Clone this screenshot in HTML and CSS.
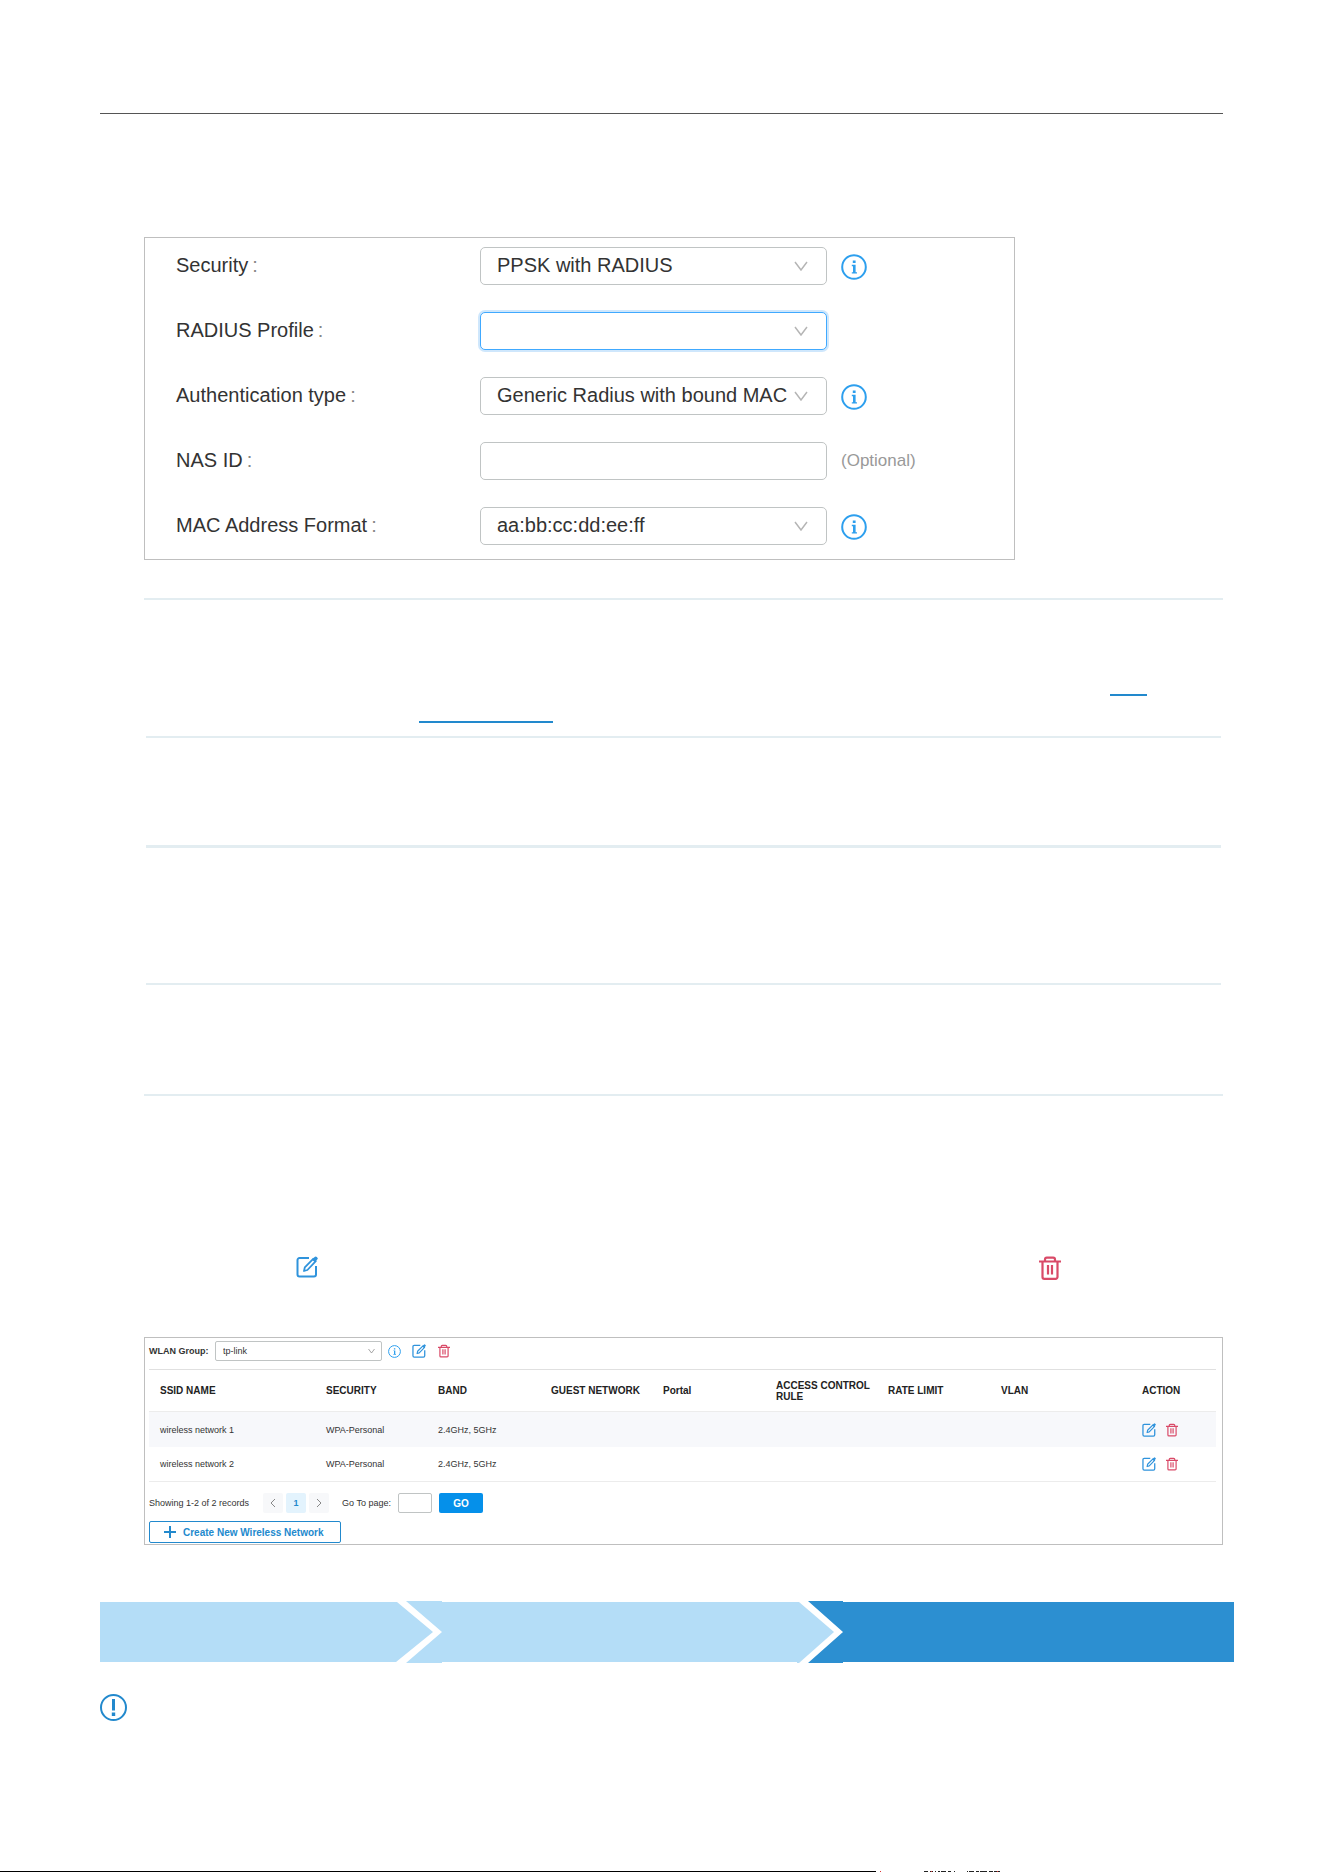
FILE: index.html
```html
<!DOCTYPE html>
<html lang="en">
<head>
    <meta charset="UTF-8">
    <meta name="viewport" content="width=device-width, initial-scale=1">
    <title></title>
    <link rel="stylesheet" href="styles.css">
</head>
<body>

<!--icons-->
<svg class="sprite" aria-hidden="true">
    <symbol id="arrow" viewBox="0 0 14 10">
        <path d="M1 1l6 8 6-8" fill="none" stroke="currentColor" stroke-width="1.5"/>
    </symbol>
    <symbol id="info" viewBox="0 0 26 26">
        <circle cx="13" cy="13" r="11.8" fill="none" stroke="currentColor" stroke-width="2"/>
        <path d="M11.800 6.500h2.800v2.500h-2.800zM10.800 10.800h3.800v7.400h1.400v1.400h-5.200v-1.400h1.200v-6h-1.200z" fill="currentColor"/>
    </symbol>
    <symbol id="edit" viewBox="0 0 22 22">
        <path d="M13 2H3.500a2 2 0 0 0-2 2v14.500a2 2 0 0 0 2 2H18a2 2 0 0 0 2-2V10" fill="none" stroke="currentColor" stroke-width="2"/>
        <path d="M8 15l.8-3.600L17.200 2.800l2.600 2.400-8.400 8.800z" fill="none" stroke="currentColor" stroke-width="1.800" stroke-linejoin="round"/>
        <path d="M16 3.600l2.600-2.600a1.500 1.500 0 0 1 2.200 0l.4.4a1.500 1.500 0 0 1 0 2.200L18.800 6.200z" fill="currentColor"/>
    </symbol>
    <symbol id="trash" viewBox="0 0 22 24">
        <path d="M0 5.500h22M6 5V3.500A1.800 1.800 0 0 1 7.800 1.700h6.400A1.800 1.800 0 0 1 16 3.500V5M3.500 5.500V21a1.800 1.800 0 0 0 1.800 1.800h11.400a1.800 1.800 0 0 0 1.800-1.800V5.500M9 9v9.500M13 9v9.500" fill="none" stroke="currentColor" stroke-width="2.200"/>
    </symbol>
</svg>

<div class="page">
    <div class="header"></div>

    <div class="content">
        <!--security settings-->
        <form class="panel security">
            <div class="row">
                <label for="security">Security<i>:</i></label>
                <div class="select">
                    <select id="security"><option>PPSK with RADIUS</option></select>
                    <svg class="arrow"><use href="#arrow"/></svg>
                </div>
                <svg class="info"><use href="#info"/></svg>
            </div>
            <div class="row">
                <label for="profile">RADIUS Profile<i>:</i></label>
                <div class="select">
                    <select id="profile" class="active"><option></option></select>
                    <svg class="arrow"><use href="#arrow"/></svg>
                </div>
            </div>
            <div class="row">
                <label for="auth">Authentication type<i>:</i></label>
                <div class="select">
                    <select id="auth"><option>Generic Radius with bound MAC</option></select>
                    <svg class="arrow"><use href="#arrow"/></svg>
                </div>
                <svg class="info"><use href="#info"/></svg>
            </div>
            <div class="row">
                <label for="nas">NAS ID<i>:</i></label>
                <input id="nas" type="text">
                <span class="optional">(Optional)</span>
            </div>
            <div class="row">
                <label for="mac">MAC Address Format<i>:</i></label>
                <div class="select">
                    <select id="mac"><option>aa:bb:cc:dd:ee:ff</option></select>
                    <svg class="arrow"><use href="#arrow"/></svg>
                </div>
                <svg class="info"><use href="#info"/></svg>
            </div>
        </form>

        <!--ruled rows-->
        <div class="rules">
            <div class="rule profile">
                <span class="underline short"></span>
                <span class="underline"></span>
            </div>
            <div class="rule auth"></div>
            <div class="rule nas"></div>
            <div class="rule mac"></div>
        </div>

        <div class="hint">
            <svg class="edit"><use href="#edit"/></svg>
            <svg class="trash"><use href="#trash"/></svg>
        </div>

        <!--wlan list-->
        <div class="panel wlan">
            <div class="toolbar">
                <label for="group">WLAN Group:</label>
                <div class="select">
                    <select id="group"><option>tp-link</option></select>
                    <svg class="arrow"><use href="#arrow"/></svg>
                </div>
                <svg class="info"><use href="#info"/></svg>
                <button type="button" class="icon" aria-label="Edit"><svg class="edit"><use href="#edit"/></svg></button>
                <button type="button" class="icon" aria-label="Delete"><svg class="trash"><use href="#trash"/></svg></button>
            </div>

            <table>
                <colgroup>
                    <col class="name">
                    <col><col><col><col><col><col>
                    <col class="vlan">
                    <col class="action">
                </colgroup>
                <thead>
                <tr>
                    <th>SSID NAME</th>
                    <th>SECURITY</th>
                    <th>BAND</th>
                    <th>GUEST NETWORK</th>
                    <th>Portal</th>
                    <th>ACCESS CONTROL RULE</th>
                    <th>RATE LIMIT</th>
                    <th>VLAN</th>
                    <th>ACTION</th>
                </tr>
                </thead>
                <tbody>
                <tr>
                    <td>wireless network 1</td>
                    <td>WPA-Personal</td>
                    <td>2.4GHz, 5GHz</td>
                    <td></td>
                    <td></td>
                    <td></td>
                    <td></td>
                    <td></td>
                    <td>
                        <div class="actions">
                            <button type="button" class="icon" aria-label="Edit"><svg class="edit"><use href="#edit"/></svg></button>
                            <button type="button" class="icon" aria-label="Delete"><svg class="trash"><use href="#trash"/></svg></button>
                        </div>
                    </td>
                </tr>
                <tr>
                    <td>wireless network 2</td>
                    <td>WPA-Personal</td>
                    <td>2.4GHz, 5GHz</td>
                    <td></td>
                    <td></td>
                    <td></td>
                    <td></td>
                    <td></td>
                    <td>
                        <div class="actions">
                            <button type="button" class="icon" aria-label="Edit"><svg class="edit"><use href="#edit"/></svg></button>
                            <button type="button" class="icon" aria-label="Delete"><svg class="trash"><use href="#trash"/></svg></button>
                        </div>
                    </td>
                </tr>
                </tbody>
            </table>

            <div class="pager">
                <span>Showing 1-2 of 2 records</span>
                <div class="pages">
                    <button type="button" aria-label="Previous"><svg viewBox="0 0 6 10"><path d="M5 1L1 5l4 4"/></svg></button>
                    <button type="button" class="current">1</button>
                    <button type="button" aria-label="Next"><svg viewBox="0 0 6 10"><path d="M1 1l4 4-4 4"/></svg></button>
                </div>
                <label for="goto">Go To page:</label>
                <input id="goto" type="text">
                <button type="button" class="go">GO</button>
            </div>

            <button type="button" class="create">
                <svg viewBox="0 0 12 12"><path d="M6 0v12M0 6h12"/></svg>
                Create New Wireless Network
            </button>
        </div>
    </div>

    <!--steps-->
    <div class="steps">
        <div class="step first"></div>
        <svg class="divider" viewBox="0 0 46 62">
            <path class="light" d="M0 1h1l36 30L0 61zM10 0h36v62H10l36-31z"/>
        </svg>
        <div class="step second"></div>
        <svg class="divider" viewBox="0 0 46 62">
            <path class="light" d="M0 1h2l35 30L2 62H0z"/>
            <path class="dark" d="M11 0h35v62H11l35-31z"/>
        </svg>
        <div class="step third"></div>
    </div>

    <svg class="note" viewBox="0 0 27 27">
        <circle cx="13.500" cy="13.500" r="12.500" fill="none" stroke="currentColor" stroke-width="2"/>
        <path d="M12 5h3v11.500h-3zM11.800 18.500h3.400v3.500h-3.400z" fill="currentColor"/>
    </svg>
</div>

<div class="footer">
    <span class="bar"></span>
    <svg viewBox="0 0 124 1">
        <path d="M48 0h4M54 0h3M59 0h1M62 0h2M65 0h5M72 0h3M78 0h1M91 0h1M93 0h5M100 0h3M104 0h7M113 0h4M118 0h6"/>
        <path class="red" d="M4 0h1M55 0h1M121 0h1"/>
    </svg>
</div>

</body>
</html>
```
FILE: styles.css
```css
* {
    margin: 0;
    padding: 0;
    box-sizing: border-box;
}

body{
    min-height: 100vh;
    display: flex;
    flex-direction: column;

    background-color: #fff;
    color: #333;
    font-family: "Liberation Sans", Arial, sans-serif;
}

svg{
    display: block;
    flex-shrink: 0;
}

.sprite{
    position: absolute;
    width: 0;
    height: 0;
}

button,
input,
select{
    font: inherit;
    color: inherit;
    background-color: #fff;
}

.page{
    padding: 113px 90px 0 100px;
}

.header{
    margin-right: 11px;
    border-top: 1px solid #555;
}

.content{
    padding: 123px 11px 0 44px;
}

.panel{
    border: 1px solid #bfbfbf;
}

/*selects*/
.select{
    position: relative;
}

select{
    appearance: none;
    width: 100%;
    height: 100%;
    border: 1px solid #c0c4c4;
    border-radius: 5px;
    outline: none;
}

.select .arrow{
    position: absolute;
    top: 50%;
    transform: translateY(-50%);
    color: #b5b5b5;
    pointer-events: none;
}

.info{
    color: #2d9fee;
}

.edit{
    color: #2f93dc;
}

.trash{
    color: #d94a68;
}

/*security settings*/
.security{
    max-width: 871px;
    padding: 9px 31px 14px;

    display: flex;
    flex-direction: column;
    gap: 27px;

    font-size: 20px;
}

.security .row{
    height: 38px;
    display: flex;
    align-items: center;
}

.security label{
    width: 304px;
    padding-bottom: 2px;
}

.security label i{
    margin-left: 4px;
    color: #888;
    font-style: normal;
}

.security .select,
.security input{
    width: 347px;
    height: 38px;
}

.security select{
    padding: 0 18px 2px 16px;
}

.security input{
    padding: 0 16px;
    border: 1px solid #c0c4c4;
    border-radius: 5px;
}

.security select.active{
    border-color: #40a9ff;
    box-shadow: 0 0 0 2px #cfe7fc;
}

.security .arrow{
    right: 19px;
    width: 14px;
    height: 10px;
}

.security .info{
    width: 26px;
    height: 26px;
    margin: 1px 0 0 14px;
}

.optional{
    margin-left: 14px;
    font-size: 17px;
    color: #999;
}

/*ruled rows*/
.rules{
    margin-top: 38px;
    border-top: 2px solid #e3edf1;
}

.rule{
    margin: 0 2px;
    border-bottom: 2px solid #e3edf1;
}

.rule.profile{
    height: 138px;
    padding: 94px 74px 0 273px;

    display: flex;
    flex-direction: column;
    gap: 25px;
}

.rule.auth{
    height: 110px;
    border-bottom-width: 3px;
}

.rule.nas{
    height: 137px;
}

.rule.mac{
    height: 111px;
    margin: 0;
}

.underline{
    width: 134px;
    height: 2px;
    background-color: #2289cd;
}

.underline.short{
    width: 37px;
    align-self: flex-end;
}

.hint{
    padding: 160px 162px 57px 152px;
    display: flex;
    justify-content: space-between;
}

.hint .edit{
    width: 22px;
    height: 22px;
}

.hint .trash{
    width: 22px;
    height: 24px;
}

/*wlan list*/
.wlan{
    padding: 3px 6px 1px 4px;
    font-size: 9px;
}

.icon{
    border: 0;
    background: none;
}

.wlan .edit{
    width: 14px;
    height: 14px;
}

.wlan .trash{
    width: 12px;
    height: 14px;
}

.toolbar{
    padding-bottom: 8px;
    display: flex;
    align-items: center;
}

.toolbar label{
    width: 66px;
    font-weight: bold;
}

.toolbar .select{
    width: 167px;
    height: 20px;
}

.toolbar select{
    padding: 0 20px 0 7px;
    border-radius: 2px;
}

.toolbar .arrow{
    right: 7px;
    width: 7px;
    height: 5px;
    color: #888;
}

.toolbar .info{
    width: 13px;
    height: 13px;
    margin: 0 11px 0 6px;
}

.toolbar .icon + .icon{
    margin-left: 12px;
}

table{
    width: 100%;
    table-layout: fixed;
    border-spacing: 0;
    border-top: 1px solid #e0e0e0;
}

col{
    width: 112px;
}

col:nth-child(odd){
    width: 113px;
}

col.name{
    width: 166px;
}

col.vlan{
    width: 141px;
}

col.action{
    width: 85px;
}

th,
td{
    padding: 0 0 0 11px;
    text-align: left;
    vertical-align: middle;
}

th{
    height: 42px;
    border-bottom: 1px solid #ececec;
    font-size: 10px;
    line-height: 11px;
    color: #222;
}

td{
    height: 35px;
}

tbody tr:first-child td{
    background-color: #f7f8fb;
}

tbody tr:last-child td{
    border-bottom: 1px solid #ececec;
}

.actions{
    display: flex;
    gap: 10px;
}

.pager{
    margin-top: 11px;
    height: 20px;
    display: flex;
    align-items: center;
}

.pages{
    margin: 0 13px 0 14px;
    display: flex;
    gap: 3px;
}

.pages button{
    width: 20px;
    height: 20px;
    border: 0;
    border-radius: 2px;
    background-color: #f7f8fa;

    display: flex;
    justify-content: center;
    align-items: center;
}

.pages button.current{
    background-color: #e3f3fd;
    color: #2289cd;
    font-weight: bold;
}

.pages svg{
    width: 6px;
    height: 10px;
    fill: none;
    stroke: #888;
}

.pager input{
    width: 34px;
    height: 20px;
    margin: 0 7px;
    padding: 0 4px;
    border: 1px solid #c0c4c4;
    border-radius: 2px;
}

.go{
    width: 44px;
    height: 20px;
    border: 0;
    border-radius: 2px;
    background-color: #0590ea;
    color: #fff;
    font-size: 10px;
    font-weight: bold;
}

.create{
    height: 22px;
    margin-top: 8px;
    padding: 0 16px 0 14px;
    border: 1px solid #2289cd;
    border-radius: 2px;

    display: flex;
    align-items: center;
    gap: 7px;

    color: #2289cd;
    font-size: 10px;
    font-weight: bold;
}

.create svg{
    width: 12px;
    height: 12px;
    stroke: #2289cd;
    stroke-width: 2;
}

/*steps*/
.steps{
    margin-top: 56px;
    display: flex;
    align-items: center;
}

.step{
    height: 60px;
    background-color: #b4ddf7;
}

.step.first{
    flex: 296;
}

.step.second{
    flex: 355;
}

.step.third{
    flex: 391;
    background-color: #2c8fd1;
}

.divider{
    width: 46px;
    height: 62px;
}

.divider .light{
    fill: #b4ddf7;
}

.divider .dark{
    fill: #2c8fd1;
}

.note{
    width: 27px;
    height: 27px;
    margin-top: 31px;
    color: #2289cd;
}

/*bottom edge*/
.footer{
    margin-top: auto;
    display: flex;
}

.footer .bar{
    width: 876px;
    height: 1px;
    background-color: #000;
}

.footer svg{
    width: 124px;
    height: 1px;
    stroke: #222;
    stroke-width: 2;
}

.footer .red{
    stroke: #d33;
}
```
